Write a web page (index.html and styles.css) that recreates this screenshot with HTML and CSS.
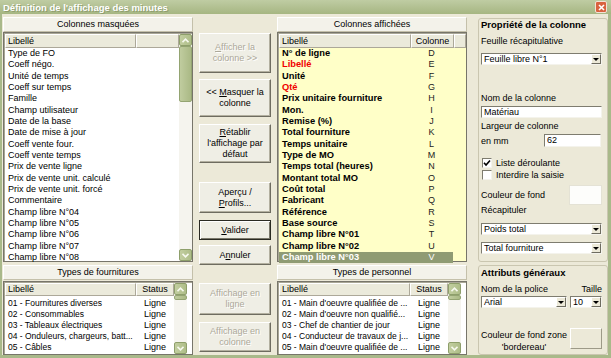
FILE: index.html
```html
<!DOCTYPE html>
<html lang="fr">
<head>
    <meta charset="UTF-8">
    <title>Définition de l'affichage des minutes</title>
    <link rel="stylesheet" href="styles.css">
</head>
<body>
<div class="window">
    <div class="titlebar">
        <span class="title">Définition de l'affichage des minutes</span>
        <span class="close">
            <svg width="7" height="7" viewBox="0 0 7 7"><path d="M1 1L6 6M6 1L1 6" stroke="#fff" stroke-width="1.6"/></svg>
        </span>
    </div>
    <div class="frame">
        <!-- colonnes masquées -->
        <div class="col col-left">
            <div class="sect-head">Colonnes masquées</div>
            <div class="listbox list-tall">
                <div class="list-main">
                    <div class="lh"><span class="h1">Libellé</span><span class="h2"></span></div>
                    <div class="row"><span class="c1">Type de FO</span></div>
                    <div class="row"><span class="c1">Coeff négo.</span></div>
                    <div class="row"><span class="c1">Unité de temps</span></div>
                    <div class="row"><span class="c1">Coeff sur temps</span></div>
                    <div class="row"><span class="c1">Famille</span></div>
                    <div class="row"><span class="c1">Champ utilisateur</span></div>
                    <div class="row"><span class="c1">Date de la base</span></div>
                    <div class="row"><span class="c1">Date de mise à jour</span></div>
                    <div class="row"><span class="c1">Coeff vente four.</span></div>
                    <div class="row"><span class="c1">Coeff vente temps</span></div>
                    <div class="row"><span class="c1">Prix de vente ligne</span></div>
                    <div class="row"><span class="c1">Prix de vente unit. calculé</span></div>
                    <div class="row"><span class="c1">Prix de vente unit. forcé</span></div>
                    <div class="row"><span class="c1">Commentaire</span></div>
                    <div class="row"><span class="c1">Champ libre N°04</span></div>
                    <div class="row"><span class="c1">Champ libre N°05</span></div>
                    <div class="row"><span class="c1">Champ libre N°06</span></div>
                    <div class="row"><span class="c1">Champ libre N°07</span></div>
                    <div class="row"><span class="c1">Champ libre N°08</span></div>
                </div>
                <div class="vscroll">
                    <div class="sb-btn"><svg width="7" height="5" viewBox="0 0 7 5"><path d="M0.5 4.2L3.5 1.2L6.5 4.2" fill="none" stroke="#f6f8ee" stroke-width="1.6"/></svg></div>
                    <div class="sb-track"><div class="sb-thumb thumb-big"></div></div>
                    <div class="sb-btn"><svg width="7" height="5" viewBox="0 0 7 5"><path d="M0.5 0.8L3.5 3.8L6.5 0.8" fill="none" stroke="#f6f8ee" stroke-width="1.6"/></svg></div>
                </div>
            </div>

            <div class="sect-head sect-low">Types de fournitures</div>
            <div class="listbox list-short">
                <div class="list-main">
                    <div class="lh"><span class="h1">Libellé</span><span class="h2s">Status</span></div>
                    <div class="rows-short">
                        <div class="row row-s"><span class="c1">01 - Fournitures diverses</span><span class="c2s">Ligne</span></div>
                        <div class="row row-s"><span class="c1">02 - Consommables</span><span class="c2s">Ligne</span></div>
                        <div class="row row-s"><span class="c1">03 - Tableaux électriques</span><span class="c2s">Ligne</span></div>
                        <div class="row row-s"><span class="c1">04 - Onduleurs, chargeurs, batt...</span><span class="c2s">Ligne</span></div>
                        <div class="row row-s"><span class="c1">05 - Câbles</span><span class="c2s">Ligne</span></div>
                    </div>
                </div>
                <div class="vscroll">
                    <div class="sb-btn"><svg width="7" height="5" viewBox="0 0 7 5"><path d="M0.5 4.2L3.5 1.2L6.5 4.2" fill="none" stroke="#f6f8ee" stroke-width="1.6"/></svg></div>
                    <div class="sb-track"><div class="sb-thumb thumb-small"></div></div>
                    <div class="sb-btn"><svg width="7" height="5" viewBox="0 0 7 5"><path d="M0.5 0.8L3.5 3.8L6.5 0.8" fill="none" stroke="#f6f8ee" stroke-width="1.6"/></svg></div>
                </div>
                <div class="list-fill"></div>
            </div>
        </div>

        <!-- boutons -->
        <div class="col col-buttons">
            <div class="btn disabled b1"><span><u>A</u>fficher la<br>colonne &gt;&gt;</span></div>
            <div class="btn b2"><span>&lt;&lt; <u>M</u>asquer la<br>colonne</span></div>
            <div class="btn b3"><span><u>R</u>établir<br>l'affichage par<br>défaut</span></div>
            <div class="btn b4"><span>Aperçu /<br><u>P</u>rofils...</span></div>
            <div class="btn default b5"><span><u>V</u>alider</span></div>
            <div class="btn b6"><span>A<u>n</u>nuler</span></div>
            <div class="btn disabled b7"><span>Affichage en<br>ligne</span></div>
            <div class="btn disabled b8"><span>Affichage en<br>colonne</span></div>
        </div>

        <!-- colonnes affichées -->
        <div class="col col-shown">
            <div class="sect-head">Colonnes affichées</div>
            <div class="listbox list-tall list-yellow">
                <div class="list-main">
                    <div class="lh"><span class="h1 h1y">Libellé</span><span class="h2 center">Colonne</span><span class="h3"></span></div>
                    <div class="row bold"><span class="c1">N° de ligne</span><span class="c2">D</span></div>
                    <div class="row bold red"><span class="c1">Libellé</span><span class="c2">E</span></div>
                    <div class="row bold"><span class="c1">Unité</span><span class="c2">F</span></div>
                    <div class="row bold red"><span class="c1">Qté</span><span class="c2">G</span></div>
                    <div class="row bold"><span class="c1">Prix unitaire fourniture</span><span class="c2">H</span></div>
                    <div class="row bold"><span class="c1">Mon.</span><span class="c2">I</span></div>
                    <div class="row bold"><span class="c1">Remise (%)</span><span class="c2">J</span></div>
                    <div class="row bold"><span class="c1">Total fourniture</span><span class="c2">K</span></div>
                    <div class="row bold"><span class="c1">Temps unitaire</span><span class="c2">L</span></div>
                    <div class="row bold"><span class="c1">Type de MO</span><span class="c2">M</span></div>
                    <div class="row bold"><span class="c1">Temps total (heures)</span><span class="c2">N</span></div>
                    <div class="row bold"><span class="c1">Montant total MO</span><span class="c2">O</span></div>
                    <div class="row bold"><span class="c1">Coût total</span><span class="c2">P</span></div>
                    <div class="row bold"><span class="c1">Fabricant</span><span class="c2">Q</span></div>
                    <div class="row bold"><span class="c1">Référence</span><span class="c2">R</span></div>
                    <div class="row bold"><span class="c1">Base source</span><span class="c2">S</span></div>
                    <div class="row bold"><span class="c1">Champ libre N°01</span><span class="c2">T</span></div>
                    <div class="row bold"><span class="c1">Champ libre N°02</span><span class="c2">U</span></div>
                    <div class="row bold selected"><span class="c1">Champ libre N°03</span><span class="c2">V</span></div>
                </div>
            </div>

            <div class="sect-head sect-low">Types de personnel</div>
            <div class="listbox list-short">
                <div class="list-main">
                    <div class="lh"><span class="h1">Libellé</span><span class="h2s">Status</span></div>
                    <div class="rows-short">
                        <div class="row row-s"><span class="c1">01 - Main d'oeuvre qualifiée de ...</span><span class="c2s">Ligne</span></div>
                        <div class="row row-s"><span class="c1">02 - Main d'oeuvre non qualifié...</span><span class="c2s">Ligne</span></div>
                        <div class="row row-s"><span class="c1">03 - Chef de chantier de jour</span><span class="c2s">Ligne</span></div>
                        <div class="row row-s"><span class="c1">04 - Conducteur de travaux de j...</span><span class="c2s">Ligne</span></div>
                        <div class="row row-s"><span class="c1">05 - Main d'oeuvre qualifiée de ...</span><span class="c2s">Ligne</span></div>
                    </div>
                </div>
                <div class="vscroll">
                    <div class="sb-btn"><svg width="7" height="5" viewBox="0 0 7 5"><path d="M0.5 4.2L3.5 1.2L6.5 4.2" fill="none" stroke="#f6f8ee" stroke-width="1.6"/></svg></div>
                    <div class="sb-track"><div class="sb-thumb thumb-small"></div></div>
                    <div class="sb-btn"><svg width="7" height="5" viewBox="0 0 7 5"><path d="M0.5 0.8L3.5 3.8L6.5 0.8" fill="none" stroke="#f6f8ee" stroke-width="1.6"/></svg></div>
                </div>
                <div class="list-fill"></div>
            </div>
        </div>

        <!-- propriétés -->
        <div class="col col-props">
            <div class="group group-top">
                <div class="g-title">Propriété de la colonne</div>
                <div class="lbl l-feuille">Feuille récapitulative</div>
                <div class="combo c-feuille"><span class="combo-text">Feuille libre N°1</span><span class="combo-btn"><i></i></span></div>
                <div class="lbl l-nom">Nom de la colonne</div>
                <div class="field f-nom">Matériau</div>
                <div class="lbl l-larg">Largeur de colonne</div>
                <div class="line l-mm">
                    <span>en mm</span>
                    <div class="field f-larg">62</div>
                </div>
                <div class="check ch-first">
                    <span class="box"><svg width="8" height="8" viewBox="0 0 8 8"><path d="M1 3.8L3 6L7 1.5" fill="none" stroke="#000" stroke-width="1.6"/></svg></span>
                    <span>Liste déroulante</span>
                </div>
                <div class="check">
                    <span class="box"></span>
                    <span>Interdire la saisie</span>
                </div>
                <div class="line l-fond">
                    <span>Couleur de fond</span>
                    <div class="swatch"></div>
                </div>
                <div class="lbl">Récapituler</div>
                <div class="combo c-recap"><span class="combo-text">Poids total</span><span class="combo-btn"><i></i></span></div>
                <div class="combo c-recap"><span class="combo-text">Total fourniture</span><span class="combo-btn"><i></i></span></div>
            </div>

            <div class="group group-bottom">
                <div class="g-title">Attributs généraux</div>
                <div class="line l-police">
                    <span>Nom de la police</span>
                    <span>Taille</span>
                </div>
                <div class="line l-combos">
                    <div class="combo c-police"><span class="combo-text">Arial</span><span class="combo-btn"><i></i></span></div>
                    <div class="combo c-taille"><span class="combo-text">10</span><span class="combo-btn"><i></i></span></div>
                </div>
                <div class="line l-zone">
                    <span class="zone-text">Couleur de fond zone<br>'bordereau'</span>
                    <div class="swatch swatch-raised"></div>
                </div>
            </div>
        </div>
    </div>
</div>
</body>
</html>
```

FILE: styles.css
```css
body {
    margin: 0;
    font-family: "Liberation Sans", Arial, sans-serif;
    font-size: 9px;
    color: #000;
}

.window {
    width: 611px;
    height: 358px;
    background: #ece9d8;
}

.titlebar {
    height: 14px;
    background: linear-gradient(#bfcca3, #a6b682);
    display: flex;
    align-items: center;
    justify-content: space-between;
    padding: 0 4px 0 3px;
    color: #fff;
    font-weight: bold;
    font-size: 9.5px;
    text-shadow: 1px 1px 0 #8e9d6e;
}

.close {
    width: 10px;
    height: 10px;
    background: #d9623f;
    border: 1px solid #f3e2d6;
    border-radius: 2px;
    display: flex;
    align-items: center;
    justify-content: center;
}

.frame {
    height: 344px;
    box-sizing: border-box;
    border: solid #a9b98a;
    border-width: 0 3px 3px 2px;
    padding: 3px 0 0 1px;
    display: flex;
}

.col {
    display: flex;
    flex-direction: column;
}

.col-left,
.col-shown {
    width: 190px;
}

.col-buttons {
    width: 72px;
    margin: 0 6px;
}

.col-props {
    width: 130px;
    margin-left: 11px;
}

/* entêtes de section */
.sect-head {
    height: 15px;
    line-height: 13px;
    box-sizing: border-box;
    text-align: center;
    background: #f3f2ea;
    border: 1px solid;
    border-color: #fff #c4c0aa #c4c0aa #fff;
}

.sect-low {
    margin-top: 3px;
}

/* listes */
.listbox {
    box-sizing: border-box;
    border: 1px solid #77756a;
    box-shadow: inset 1px 1px 0 #a9a796;
    padding: 1px 0 0 1px;
    background: #fff;
    display: flex;
}

.list-tall {
    height: 230px;
}

.list-short {
    height: 74px;
    margin-top: 1px;
}

.list-yellow {
    background: #ffffc8;
}

.list-main {
    width: 174px;
}

.list-yellow .list-main {
    width: 187px;
}

.lh {
    display: flex;
    height: 14px;
}

.lh span {
    box-sizing: border-box;
    height: 14px;
    line-height: 12px;
    padding-left: 2px;
    background: #ebeadb;
    border: 1px solid;
    border-color: #fff #aca899 #aca899 #fff;
}

.lh .h1 { width: 131px; }
.lh .h1y { width: 132px; }
.lh .h2 { width: 43px; }
.lh .h2s { width: 38px; text-align: center; padding-left: 0; }
.lh .h3 { width: 12px; }
.lh .center { text-align: center; padding-left: 0; }

.list-short .list-main {
    width: 169px;
}

.list-short .lh {
    height: 13px;
}

.list-short .lh span {
    height: 13px;
    line-height: 11px;
}

.row {
    display: flex;
    width: 174px;
    height: 11.33px;
    line-height: 11.33px;
    white-space: nowrap;
}

.row .c1 {
    width: 131px;
    padding-left: 3px;
    box-sizing: border-box;
    overflow: hidden;
}

.row .c2 {
    width: 43px;
    text-align: center;
    font-weight: normal;
    color: #222;
}

.rows-short {
    padding-top: 2px;
}

.row-s {
    width: 169px;
    height: 11px;
    line-height: 11px;
    font-size: 8.5px;
}

.row .c2s {
    width: 38px;
    text-align: center;
    font-size: 9px;
}

.bold .c1 {
    font-weight: bold;
    font-size: 9.3px;
}

.red .c1 {
    color: #f00000;
}

.selected {
    background: #8f9b73;
}

.selected .c1,
.selected .c2 {
    color: #fff;
}

.list-fill {
    width: 5px;
}

/* barre de défilement */
.vscroll {
    width: 13px;
    display: flex;
    flex-direction: column;
    background: #f5f4ee;
}

.sb-btn {
    height: 12px;
    box-sizing: border-box;
    background: linear-gradient(90deg, #c2cea0, #aebd88);
    border: 1px solid #8e9f6b;
    border-radius: 2px;
    display: flex;
    align-items: center;
    justify-content: center;
}

.sb-track {
    flex: 1;
}

.sb-thumb {
    box-sizing: border-box;
    background: linear-gradient(90deg, #c0cc9f, #aab985);
    border: 1px solid #94a472;
    border-radius: 2px;
}

.thumb-big {
    height: 56px;
}

.thumb-small {
    height: 5px;
}

/* boutons */
.btn {
    box-sizing: border-box;
    display: flex;
    align-items: center;
    justify-content: center;
    text-align: center;
    line-height: 11px;
    background: #efeee5;
    border: 1px solid;
    border-color: #fff #6e6c60 #6e6c60 #fff;
    box-shadow: inset -1px -1px 0 #b3b0a0;
}

.btn.default {
    border-color: #2a2a22;
    box-shadow: inset 1px 1px 0 #fff, inset -1px -1px 0 #7a786b;
}

.btn.disabled {
    color: #aca899;
    text-shadow: 1px 1px 0 #fff;
}

.b1 { margin-top: 16px; height: 40px; }
.b2 { margin-top: 6px; height: 38px; }
.b3 { margin-top: 7px; height: 39px; }
.b4 { margin-top: 19px; height: 31px; }
.b5 { margin-top: 7px; height: 20px; }
.b6 { margin-top: 5px; height: 20px; }
.b7 { margin-top: 18px; height: 32px; }
.b8 { margin-top: 7px; height: 30px; }

/* panneau propriétés */
.group {
    box-sizing: border-box;
    border: 1px solid #cac6b0;
    border-radius: 3px;
    padding: 0 5px 0 2px;
}

.group-top {
    margin-top: 1px;
    height: 244px;
}

.group-bottom {
    margin-top: 3px;
    height: 90px;
    padding-top: 1px;
}

.g-title {
    font-weight: bold;
    font-size: 9.5px;
    line-height: 11px;
}

.lbl {
    line-height: 11px;
}

.l-feuille { margin-top: 6px; }
.l-nom { margin-top: 28px; }
.l-larg { margin-top: 3px; }

.line {
    display: flex;
    align-items: center;
    justify-content: space-between;
}

.l-mm { margin-top: 2px; }
.l-fond { margin-top: 4px; }

.combo,
.field {
    box-sizing: border-box;
    height: 12px;
    background: #fff;
    border: 1px solid;
    border-color: #7e7c6f #f4f3ec #f4f3ec #7e7c6f;
}

.combo {
    display: flex;
}

.combo-text,
.field {
    padding-left: 2px;
    line-height: 10px;
}

.combo-text {
    flex: 1;
}

.combo-btn {
    width: 10px;
    height: 10px;
    box-sizing: border-box;
    background: #ece9d8;
    border: 1px solid;
    border-color: #fff #6e6c60 #6e6c60 #fff;
    display: flex;
    align-items: center;
    justify-content: center;
}

.combo-btn i {
    width: 0;
    height: 0;
    border-left: 3px solid transparent;
    border-right: 3px solid transparent;
    border-top: 3px solid #000;
}

.c-feuille { margin-top: 6px; }
.f-nom { margin-top: 2px; }

.f-larg {
    width: 57px;
    height: 13px;
    line-height: 11px;
    margin-right: 1px;
}

.check {
    display: flex;
    align-items: center;
    height: 12px;
    padding-left: 1px;
}

.ch-first {
    margin-top: 10px;
}

.check .box {
    width: 10px;
    height: 10px;
    box-sizing: border-box;
    background: #fff;
    border: 1px solid;
    border-color: #7e7c6f #f4f3ec #f4f3ec #7e7c6f;
    margin-right: 4px;
    display: flex;
    align-items: center;
    justify-content: center;
}

.swatch {
    width: 33px;
    height: 20px;
    box-sizing: border-box;
    background: #fdfdfb;
    border: 1px solid #e4e2d5;
}

.c-recap { margin-top: 7px; }

.l-police {
    margin-top: 6px;
    line-height: 11px;
}

.l-combos {
    margin-top: 1px;
}

.c-police { width: 86px; }
.c-taille { width: 32px; }

.l-zone {
    margin-top: 20px;
    align-items: flex-start;
}

.zone-text {
    width: 86px;
    text-align: center;
    line-height: 12px;
    margin-top: 1px;
    white-space: nowrap;
}

.swatch-raised {
    width: 32px;
    height: 21px;
    background: #ece9d8;
    border-color: #fff #9d9a88 #9d9a88 #fff;
}
```
